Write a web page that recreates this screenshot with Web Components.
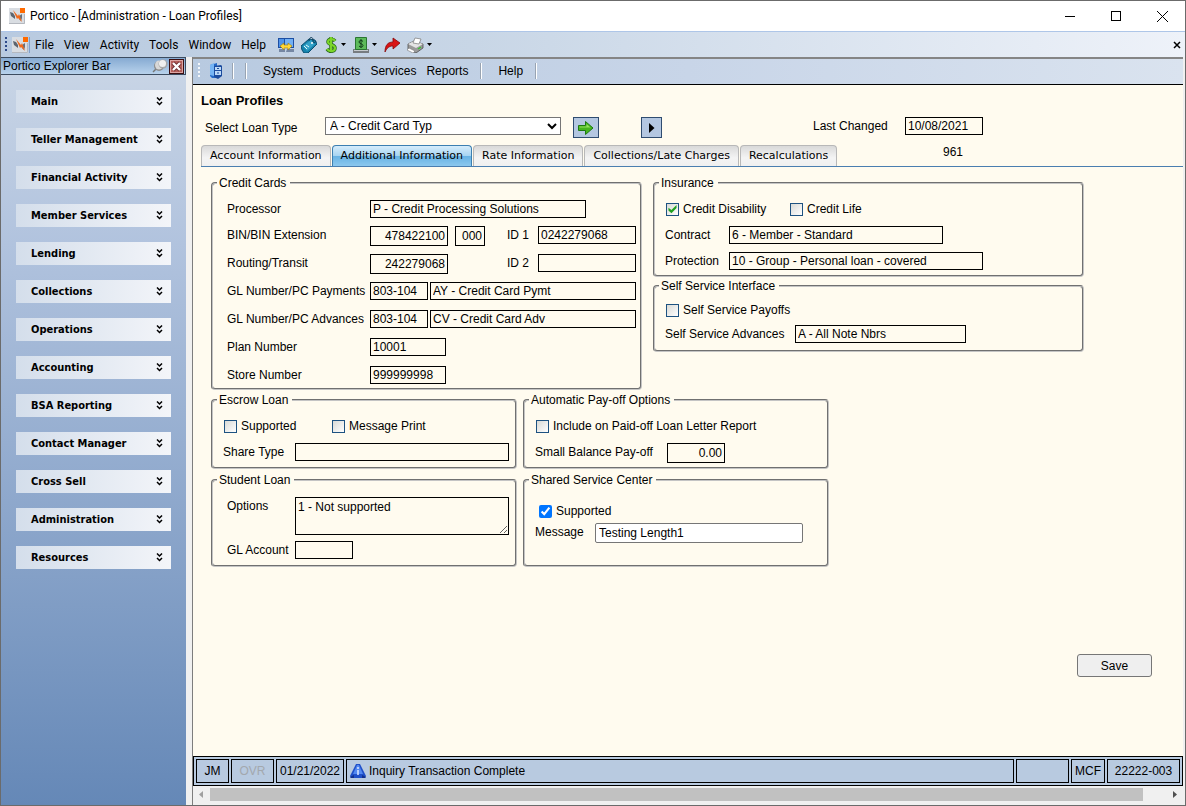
<!DOCTYPE html>
<html lang="en">
<head>
<meta charset="utf-8">
<title>Portico - [Administration - Loan Profiles]</title>
<style>
  html, body {
    height: 100%;
    margin: 0;
  }

  body {
    font-family: "Liberation Sans", Arial, sans-serif;
    font-size: 12px;
    line-height: 18px;
    color: #000;
    --cream: #fffbef;
    --steel: #b8cae0;
    --ui-font: Roboto, "Segoe UI", sans-serif;
  }
</style>
</head>
<body>
<portico-app></portico-app>

<script>
class PtElement extends HTMLElement {
  constructor() {
    super();
    this.attachShadow({ mode: 'open' });
  }

  connectedCallback() {
    this.shadowRoot.innerHTML = `
      <style>
        *, *::before, *::after { box-sizing: border-box; }
        button, input, select, textarea { font: inherit; color: inherit; margin: 0; }
        ${this.styles()}
      </style>
      ${this.template()}
    `;
  }

  attr(name, fallback = '') {
    return this.getAttribute(name) ?? fallback;
  }
}

const ICONS = {
  logo: `<svg viewBox="0 0 16 16" width="16" height="16">
    <rect width="16" height="16" fill="#d9dde2"/><path d="M0 15.500H15.500V6" fill="none" stroke="#b4b8bf"/>
    <path d="M1 4l3 1 2 3v3L2 8z" fill="#5d656f"/><path d="M10 8l3-2v4l-1 3-2-2z" fill="#6a717b"/>
    <path d="M4 2l5 6 1-2 3 8-4-4-1 1z" fill="#f26a1b"/><rect x="11" y="0" width="5" height="5" fill="#ff6a00"/></svg>`,
  monitors: `<svg viewBox="0 0 16 16" width="16" height="16">
    <rect x=".5" y="1.500" width="9" height="9" fill="#4f93e8" stroke="#1d4fa3"/><rect x="6.500" y="1.500" width="9" height="9" fill="#72b0f4" stroke="#1d4fa3"/>
    <path d="M1 12h6v3H1zM9 12h7v3H8z" fill="#7587a3"/><path d="M2 9l4-3v2h4V6l4 3-4 4v-2H6v2z" fill="#ffd83a" stroke="#a07a00" stroke-width=".6"/></svg>`,
  tag: `<svg viewBox="0 0 16 16" width="16" height="16">
    <path d="M0 9l8-7 6 1 2 4-9 9-4 0-2-3z" fill="#1683ac" stroke="#0b4e70"/><path d="M2 9l8-6 4 4-8 7z" fill="#35a2c8"/>
    <path d="M8 4c0-4 4-5 4-1s2 3 3 1" fill="none" stroke="#123c57"/><path d="M3 9l3 3M5 8l3 2" stroke="#e4fbff"/><circle cx="11" cy="6" r="1" fill="#fff"/></svg>`,
  dollar: `<svg viewBox="0 0 14 16" width="14" height="16">
    <path d="M11 4C9 1 4 2 4 5s7 2 7 6-6 4-8 1M7 0v16" fill="none" stroke="#28661a" stroke-width="3.500"/>
    <path d="M11 4C9 1 4 2 4 5s7 2 7 6-6 4-8 1M7 0v15" fill="none" stroke="#7bd628" stroke-width="2.200"/></svg>`,
  bill: `<svg viewBox="0 0 16 16" width="16" height="16">
    <path d="M0 12h16v4H0z" fill="#777c80"/><path d="M1 13.500h14" stroke="#c7cccf"/><path d="M2.500.5h11v12h-11z" fill="#5dbb5b" stroke="#2a7632"/>
    <path d="M10 4.500C9 3 6 3 6 5s4 1.500 4 3.500-3 2-4 .5M8 2v9" fill="none" stroke="#123e1c"/></svg>`,
  share: `<svg viewBox="0 0 16 16" width="16" height="16">
    <path d="M1 15C1 8 4 5 9 5V1l7 5-7 6V9c-4 0-6 2-8 6z" fill="#d91414" stroke="#850808" stroke-width=".8"/></svg>`,
  printer: `<svg viewBox="0 0 17 16" width="17" height="16">
    <path d="M1 7l6-3 9 3v4l-7 5-8-4z" fill="#9b9b9b" stroke="#4e4e4e" stroke-width=".8"/><path d="M1 7l6-3 9 3-7 4z" fill="#e4e4e4"/>
    <path d="M6 6l2-5 6 1-2 5z" fill="#fff" stroke="#777" stroke-width=".7"/><path d="M2 11l6 3-2 2-6-3z" fill="#fff" stroke="#777" stroke-width=".6"/><path d="M11 12l3-2" stroke="#3cc134" stroke-width="1.500"/></svg>`,
  server: `<svg viewBox="0 0 14 16" width="14" height="16">
    <path d="M1 2l7-2v15H3l-2-2z" fill="#2369c9"/><path d="M1 2l4-2v13l-4-1z" fill="#76b5f5"/><path d="M5 3l7-1 1 1v10l-4 3-4-2z" fill="#1b4b9e"/>
    <path d="M6 4h6v3H6zM6 8h6v4H6z" fill="#bcd9f7"/><path d="M8 5.500h2M8 10h2" stroke="#1b4b9e"/></svg>`,
  pin: `<svg viewBox="0 0 16 14" width="16" height="14">
    <path d="M1 13l4-4" stroke="#777" stroke-width="1.500"/><ellipse cx="7" cy="7" rx="5" ry="5" fill="#8c8c8c"/><ellipse cx="7" cy="6" rx="4" ry="4.500" fill="#d8d8d8"/>
    <circle cx="11" cy="5" r="4.500" fill="#a8a8a8"/><circle cx="10.500" cy="4.500" r="3.500" fill="#efefef"/></svg>`,
  closeBox: `<svg viewBox="0 0 15 15" width="15" height="15">
    <rect x=".5" y=".5" width="14" height="14" fill="#b5605c" stroke="#3b0e10"/><rect x="1.500" y="1.500" width="12" height="12" fill="none" stroke="#dba5a3"/>
    <path d="M4 4l7 7M11 4l-7 7" stroke="#6d2a2c" stroke-width="4"/><path d="M4 4l7 7M11 4l-7 7" stroke="#fff" stroke-width="2.400"/></svg>`,
  chevrons: `<svg viewBox="0 0 7 9" width="7" height="9">
    <path d="M1 .5l2.500 2.500L6 .5M1 5l2.500 2.500L6 5" fill="none" stroke="#000" stroke-width="1.500"/></svg>`,
  go: `<svg viewBox="0 0 16 14" width="16" height="14">
    <path d="M.5 4.500h7v-4L15 7l-7.500 6.500v-4h-7z" fill="#46b51e" stroke="#1d7a12"/><path d="M1.500 5.500h7V3l4 3.500h-11z" fill="#92e05d"/></svg>`,
  play: `<svg viewBox="0 0 6 10" width="6" height="10"><path d="M0 0l5.500 5L0 10z" fill="#000"/></svg>`,
  info: `<svg viewBox="0 0 16 16" width="16" height="16">
    <path d="M6 1h4l6 12-1 2H1l-1-2z" fill="#1f4fc8"/><path d="M7 2h2l4 9H3z" fill="#5288f0"/><path d="M0 14l4-2v3H1zM16 14l-4-2v3h3z" fill="#12308c"/>
    <path d="M8 4v2M8 7v5" stroke="#dbe6ff" stroke-width="1.500"/></svg>`,
  caret: `<svg viewBox="0 0 5 3" width="5" height="3"><path d="M0 0h5L2.500 3z" fill="#000"/></svg>`
};

class PtTitlebar extends PtElement {
  styles() {
    return `
      :host {
        display: flex;
        align-items: center;
        height: 31px;
        padding: 0 11px 0 8px;
        background: #fff;
        border-bottom: 1px solid #aec6e8;
        font: 12px/18px var(--ui-font);
      }
      svg { display: block; }
      span { flex: 1; margin-left: 5px; }
      nav { display: flex; gap: 22px; }
      button { width: 24px; height: 24px; padding: 0; border: 0; background: none; display: grid; place-items: center; }
    `;
  }

  template() {
    return `
      ${ICONS.logo}<span>Portico - [Administration - Loan Profiles]</span>
      <nav>
        <button aria-label="Minimize"><svg width="11" height="11"><path d="M0 5.500h10" stroke="#000"/></svg></button>
        <button aria-label="Maximize"><svg width="11" height="11"><rect x=".5" y=".5" width="9" height="9" fill="none" stroke="#000"/></svg></button>
        <button aria-label="Close"><svg width="11" height="11"><path d="M0 0l11 11M11 0L0 11" stroke="#000"/></svg></button>
      </nav>
    `;
  }
}

class PtMenubar extends PtElement {
  styles() {
    return `
      :host {
        display: flex;
        align-items: center;
        height: 25px;
        padding: 0 4px;
        background: linear-gradient(90deg, #b8cae0, #c8d6e6 40%, #eef2f9);
        font: 12px/18px var(--ui-font);
      }
      i { width: 2px; height: 15px; background: repeating-linear-gradient(#2d4a8a 0 2px, transparent 2px 4px); }
      svg { display: block; }
      .logo { margin-left: 5px; padding-right: 1px; border-right: 1px solid #7f9fcb; }
      button { padding: 0; border: 0; background: none; display: flex; align-items: center; gap: 3px; }
      .menus { display: flex; gap: 10px; margin-left: 5px; }
      .tools { display: flex; gap: 7px; margin-left: 12px; }
      .close { margin-left: auto; }
    `;
  }

  template() {
    const menus = ['File', 'View', 'Activity', 'Tools', 'Window', 'Help'];
    return `
      <i></i><div class="logo">${ICONS.logo}</div>
      <div class="menus">${menus.map(m => `<button>${m}</button>`).join('')}</div>
      <div class="tools">
        <button aria-label="Workstations">${ICONS.monitors}</button>
        <button aria-label="Tag">${ICONS.tag}</button>
        <button aria-label="Cash">${ICONS.dollar}${ICONS.caret}</button>
        <button aria-label="Deposit">${ICONS.bill}${ICONS.caret}</button>
        <button aria-label="Forward">${ICONS.share}</button>
        <button aria-label="Print">${ICONS.printer}${ICONS.caret}</button>
      </div>
      <button class="close" aria-label="Close window"><svg width="8" height="8"><path d="M1 1l6 6M7 1L1 7" stroke="#000" stroke-width="1.500"/></svg></button>
    `;
  }
}

class PtSidebar extends PtElement {
  styles() {
    return `
      :host {
        display: flex;
        flex-direction: column;
        width: 185px;
        flex: none;
        background: linear-gradient(#cad6e6, #b1c3de 25%, #6588b7);
      }
      header {
        display: flex;
        align-items: center;
        height: 18px;
        padding: 0 1px 0 2px;
        gap: 1px;
        border: 1px solid #3c4c60;
        border-left: 0;
        background: linear-gradient(#86aad2, #b8d2ec);
      }
      header span { flex: 1; }
      svg { display: block; }
      header button { padding: 0; border: 0; background: none; }
      nav { display: flex; flex-direction: column; gap: 15px; padding: 15px; }
      nav button {
        display: flex;
        align-items: center;
        justify-content: space-between;
        height: 23px;
        padding: 0 8px 0 15px;
        border: 0;
        background: linear-gradient(90deg, #d4deeb, #f3f5f9);
        font: bold 11px/18px "DejaVu Sans Condensed", "DejaVu Sans", Tahoma, sans-serif;
      }
    `;
  }

  template() {
    const groups = ['Main', 'Teller Management', 'Financial Activity', 'Member Services', 'Lending', 'Collections',
      'Operations', 'Accounting', 'BSA Reporting', 'Contact Manager', 'Cross Sell', 'Administration', 'Resources'];
    return `
      <header>
        <span>Portico Explorer Bar</span>
        <button aria-label="Pin">${ICONS.pin}</button>
        <button aria-label="Close bar">${ICONS.closeBox}</button>
      </header>
      <nav>${groups.map(g => `<button>${g}${ICONS.chevrons}</button>`).join('')}</nav>
    `;
  }
}

class PtToolbar extends PtElement {
  styles() {
    return `
      :host {
        display: flex;
        align-items: center;
        box-sizing: border-box;
        height: 28px;
        padding: 0 0 2px 5px;
        border-top: 2px solid #858585;
        border-bottom: 1px solid #000;
        background: linear-gradient(90deg, #b8cae0, #c8d5e8 50%, #dae3ef);
      }
      i { width: 2px; height: 15px; background: repeating-linear-gradient(#f4f7fb 0 2px, transparent 2px 4px); }
      svg { display: block; margin: 0 9px; }
      hr { width: 2px; height: 16px; margin: 0; border: solid; border-width: 0 1px; border-color: #99a4b2 #fff #fff #99a4b2; }
      hr + hr { margin-left: 11px; }
      button { padding: 0; border: 0; background: none; }
      div { display: flex; gap: 10px; margin: 0 12px 0 16px; }
    `;
  }

  template() {
    return `
      <i></i>${ICONS.server}<hr><hr>
      <div>${['System', 'Products', 'Services', 'Reports'].map(m => `<button>${m}</button>`).join('')}</div>
      <hr><div><button>Help</button></div><hr>
    `;
  }
}

class PtTabs extends PtElement {
  styles() {
    return `
      :host {
        display: flex;
        gap: 1px;
        margin-left: 8px;
        border-bottom: 1px solid #4a7eb0;
        font: 11px/20px "DejaVu Sans", Verdana, sans-serif;
      }
      button {
        height: 21px;
        padding: 0 8px;
        border: 1px solid #b8b8b8;
        border-bottom: 0;
        border-radius: 4px 4px 0 0;
        background: linear-gradient(#d9d9d9, #f4f4f4 60%, #f0f0f0);
      }
      button[aria-selected="true"] {
        border-color: #3c7fb1;
        background: linear-gradient(#d6edfb, #a6d4f1 50%, #68b3e4 52%, #8cc8ee);
      }
    `;
  }

  template() {
    const tabs = this.attr('items').split('|');
    return tabs.map(t => `<button role="tab" aria-selected="${t === this.attr('selected')}">${t}</button>`).join('');
  }
}

class PtGroup extends PtElement {
  styles() {
    return `
      :host { display: block; }
      fieldset {
        height: 100%;
        min-width: 0;
        margin: 0;
        padding: 0 14px var(--group-bottom, 4px);
        border: 2px groove #c4c4c4;
        border-radius: 4px;
      }
      legend { height: 18px; margin-left: -10px; padding: 0 4px 0 2px; }
      .rows { display: flex; flex-direction: column; gap: var(--row-gap, 8px); padding-top: var(--group-top, 8px); }
      :host([tight]) fieldset { padding-left: 10px; }
      :host([tight]) legend { margin-left: -6px; }
    `;
  }

  template() {
    return `<fieldset><legend>${this.attr('label')}</legend><div class="rows"><slot></slot></div></fieldset>`;
  }
}

class PtRow extends PtElement {
  styles() {
    return `
      :host { display: flex; align-items: flex-start; height: 18px; }
      :host([tall]) { height: 20px; }
    `;
  }

  template() {
    return '<slot></slot>';
  }
}

class PtField extends PtElement {
  styles() {
    return `
      :host { display: flex; align-items: flex-start; }
      label { width: ${this.attr('label-width', '0')}px; flex: none; white-space: nowrap; }
      input, textarea {
        display: block;
        flex: none;
        width: ${this.attr('width', '80')}px;
        height: 18px;
        padding: 0 2px;
        border: 1px solid #000;
        border-radius: 0;
        background: transparent;
      }
      textarea { height: 38px; line-height: 18px; }
      :host([numeric]) input { height: 20px; text-align: right; }
      :host([editable]) input { height: 20px; padding: 0 3px; border-color: #767676; border-radius: 2px; background: #fff; }
    `;
  }

  template() {
    const value = this.attr('value');
    const label = this.attr('label');
    const control = this.hasAttribute('multiline')
      ? `<textarea id="c">${value}</textarea>`
      : `<input id="c" type="text" value="${value}" ${label ? '' : `aria-label="${this.attr('name')}"`}>`;
    return `${label ? `<label for="c">${label}</label>` : ''}${control}`;
  }
}

class PtCheck extends PtElement {
  styles() {
    return `
      :host {
        display: flex;
        align-items: center;
        gap: 4px;
        box-sizing: border-box;
        width: ${this.attr('width', 'auto')};
        height: 18px;
        padding-left: 1px;
      }
      label { white-space: nowrap; }
      input {
        width: 13px;
        height: 13px;
      }
      :host(:not([native])) input {
        appearance: none;
        border: 1px solid #1d5281;
        background: linear-gradient(135deg, #d9dad6, #fff);
        display: grid;
        place-items: center;
      }
      :host(:not([native])) input:checked::before {
        content: "";
        width: 9px;
        height: 9px;
        background: #21a121;
        clip-path: polygon(5% 35%, 38% 62%, 95% 5%, 95% 40%, 38% 98%, 5% 68%);
      }
      :host([native]) { padding-left: 4px; }
    `;
  }

  template() {
    return `<input id="c" type="checkbox" ${this.hasAttribute('checked') ? 'checked' : ''}><label for="c">${this.attr('label')}</label>`;
  }
}

class PtLoanForm extends PtElement {
  styles() {
    return `
      :host {
        display: flex;
        flex-direction: column;
        flex: 1;
        background: var(--cream);
      }
      h1 { margin: 6px 8px; font-size: 13px; line-height: 20px; }
      .selector { display: flex; align-items: flex-start; height: 28px; padding: 0 12px; }
      .selector label { width: 120px; line-height: 22px; }
      select { width: 236px; height: 18px; padding: 0; border: 1px solid #767676; background: #fff; }
      .selector button {
        display: grid;
        place-items: center;
        height: 21px;
        padding: 0;
        border: 1px solid #2f4c70;
        background: #b4c7e1;
      }
      .go { width: 26px; margin-left: 12px; }
      .next { width: 21px; margin: 0 151px 0 42px; }
      svg { display: block; }
      .tabline { display: grid; }
      .tabline > * { grid-area: 1 / 1; }
      output { margin-left: 750px; line-height: 14px; align-self: start; }
      .groups { display: flex; flex-direction: column; align-items: flex-start; gap: 1px; padding: 7px 18px 0; }
      .pair { display: flex; gap: 11px; }
      .pair > *, .side > * { width: 431px; }
      .side { display: flex; flex-direction: column; --group-bottom: 5px; }
      .small { display: grid; grid-template-columns: 306px 306px; gap: 2px 6px; --group-bottom: 6px; }
      .save {
        align-self: flex-end;
        width: 75px;
        height: 23px;
        margin: auto 31px 79px 0;
        padding: 0;
        border: 1px solid #767676;
        border-radius: 3px;
        background: #efefef;
      }
      .spread { justify-content: space-between; width: 409px; }
      .close { --row-gap: 6px; }
      .service { --group-top: 6px; --row-gap: 6px; --group-bottom: 7px; }
      .shared { --group-top: 13px; --row-gap: 3px; }
    `;
  }

  template() {
    return `
      <h1>Loan Profiles</h1>
      <div class="selector">
        <label for="type">Select Loan Type</label>
        <select id="type"><option>A - Credit Card Typ</option></select>
        <button class="go" aria-label="Go">${ICONS.go}</button>
        <button class="next" aria-label="Next">${ICONS.play}</button>
        <pt-field label="Last Changed" label-width="92" width="78" value="10/08/2021"></pt-field>
      </div>
      <div class="tabline">
        <pt-tabs items="Account Information|Additional Information|Rate Information|Collections/Late Charges|Recalculations" selected="Additional Information"></pt-tabs>
        <output>961</output>
      </div>
      <div class="groups">
        <div class="pair">
          <pt-group label="Credit Cards">
            <pt-row><pt-field label="Processor" label-width="143" width="216" value="P - Credit Processing Solutions"></pt-field></pt-row>
            <pt-row tall class="spread">
              <pt-field numeric label="BIN/BIN Extension" label-width="143" width="78" value="478422100"></pt-field>
              <pt-field numeric name="BIN extension" width="30" value="000"></pt-field>
              <pt-field style="margin-left: 15px" label="ID 1" label-width="31" width="98" value="0242279068"></pt-field>
            </pt-row>
            <pt-row tall class="spread">
              <pt-field numeric label="Routing/Transit" label-width="143" width="78" value="242279068"></pt-field>
              <pt-field label="ID 2" label-width="31" width="98"></pt-field>
            </pt-row>
            <pt-row tall class="spread">
              <pt-field label="GL Number/PC Payments" label-width="143" width="58" value="803-104"></pt-field>
              <pt-field name="Payments code" width="206" value="AY - Credit Card Pymt"></pt-field>
            </pt-row>
            <pt-row tall class="spread">
              <pt-field label="GL Number/PC Advances" label-width="143" width="58" value="803-104"></pt-field>
              <pt-field name="Advances code" width="206" value="CV - Credit Card Adv"></pt-field>
            </pt-row>
            <pt-row tall><pt-field label="Plan Number" label-width="143" width="76" value="10001"></pt-field></pt-row>
            <pt-row><pt-field label="Store Number" label-width="143" width="76" value="999999998"></pt-field></pt-row>
          </pt-group>
          <div class="side">
            <pt-group tight label="Insurance">
              <pt-row>
                <pt-check checked width="124px" label="Credit Disability"></pt-check>
                <pt-check label="Credit Life"></pt-check>
              </pt-row>
              <pt-row><pt-field label="Contract" label-width="64" width="214" value="6 - Member - Standard"></pt-field></pt-row>
              <pt-row><pt-field label="Protection" label-width="64" width="254" value="10 - Group - Personal loan - covered"></pt-field></pt-row>
            </pt-group>
            <pt-group tight class="service" label="Self Service Interface">
              <pt-row><pt-check label="Self Service Payoffs"></pt-check></pt-row>
              <pt-row><pt-field label="Self Service Advances" label-width="130" width="171" value="A - All Note Nbrs"></pt-field></pt-row>
            </pt-group>
          </div>
        </div>
        <div class="small">
          <pt-group tight label="Escrow Loan">
            <pt-row>
              <pt-check width="108px" label="Supported"></pt-check>
              <pt-check label="Message Print"></pt-check>
            </pt-row>
            <pt-row><pt-field label="Share Type" label-width="72" width="214"></pt-field></pt-row>
          </pt-group>
          <pt-group tight label="Automatic Pay-off Options">
            <pt-row><pt-check label="Include on Paid-off Loan Letter Report"></pt-check></pt-row>
            <pt-row><pt-field numeric label="Small Balance Pay-off" label-width="132" width="58" value="0.00"></pt-field></pt-row>
          </pt-group>
          <pt-group class="close" label="Student Loan">
            <pt-field multiline label="Options" label-width="68" width="214" value="1 - Not supported"></pt-field>
            <pt-field label="GL Account" label-width="68" width="58"></pt-field>
          </pt-group>
          <pt-group tight class="shared" label="Shared Service Center">
            <pt-row><pt-check native checked label="Supported"></pt-check></pt-row>
            <pt-field editable label="Message" label-width="60" width="208" value="Testing Length1"></pt-field>
          </pt-group>
        </div>
      </div>
      <button class="save">Save</button>
    `;
  }
}

class PtStatusbar extends PtElement {
  styles() {
    return `
      :host {
        display: flex;
        gap: 2px;
        box-sizing: border-box;
        height: 30px;
        padding: 2px;
        border: 1px solid #000;
        background: var(--steel);
      }
      span {
        display: flex;
        align-items: center;
        justify-content: center;
        height: 24px;
        border: 1px solid #000;
      }
      .message { flex: 1; justify-content: flex-start; gap: 3px; padding-left: 3px; }
      .off { color: #a3a8ae; }
    `;
  }

  template() {
    return `
      <span style="width: 33px">JM</span>
      <span style="width: 43px" class="off">OVR</span>
      <span style="width: 68px">01/21/2022</span>
      <span class="message">${ICONS.info}Inquiry Transaction Complete</span>
      <span style="width: 53px"></span>
      <span style="width: 34px">MCF</span>
      <span style="width: 73px">22222-003</span>
    `;
  }
}

class PtScrollbar extends PtElement {
  styles() {
    return `
      :host { display: flex; align-items: center; box-sizing: border-box; height: 19px; padding: 0 6px 2px; background: #f0f0f0; }
      div { flex: 1; height: 13px; margin: 0 30px 0 7px; background: #c1c1c1; }
      svg { display: block; }
    `;
  }

  template() {
    return `
      <svg width="4" height="7"><path d="M4 0v7L0 3.500z" fill="#a0a0a0"/></svg>
      <div></div>
      <svg width="4" height="7"><path d="M0 0v7l4-3.500z" fill="#505050"/></svg>
    `;
  }
}

class PorticoApp extends PtElement {
  styles() {
    return `
      :host {
        display: flex;
        flex-direction: column;
        min-height: 100vh;
        box-sizing: border-box;
        border: 1px solid #6b6b6b;
        background: #f0f0f0;
      }
      .body { display: flex; flex: 1; gap: 6px; padding-right: 2px; }
      main { display: flex; flex-direction: column; flex: 1; border-left: 1px solid #7d7d7d; }
    `;
  }

  template() {
    return `
      <pt-titlebar></pt-titlebar>
      <pt-menubar></pt-menubar>
      <div class="body">
        <pt-sidebar></pt-sidebar>
        <main>
          <pt-toolbar></pt-toolbar>
          <pt-loan-form></pt-loan-form>
          <pt-statusbar></pt-statusbar>
          <pt-scrollbar></pt-scrollbar>
        </main>
      </div>
    `;
  }
}

customElements.define('pt-titlebar', PtTitlebar);
customElements.define('pt-menubar', PtMenubar);
customElements.define('pt-sidebar', PtSidebar);
customElements.define('pt-toolbar', PtToolbar);
customElements.define('pt-tabs', PtTabs);
customElements.define('pt-group', PtGroup);
customElements.define('pt-row', PtRow);
customElements.define('pt-field', PtField);
customElements.define('pt-check', PtCheck);
customElements.define('pt-loan-form', PtLoanForm);
customElements.define('pt-statusbar', PtStatusbar);
customElements.define('pt-scrollbar', PtScrollbar);
customElements.define('portico-app', PorticoApp);
</script>
</body>
</html>
